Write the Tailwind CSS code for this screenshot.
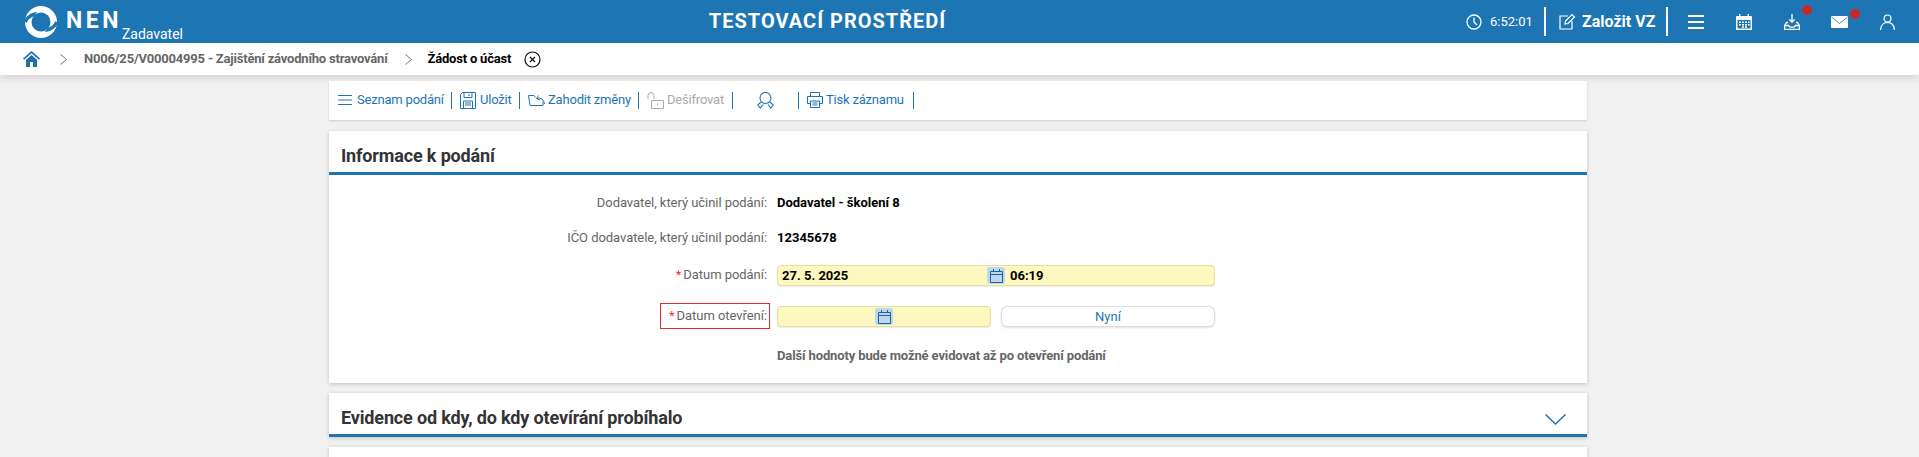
<!DOCTYPE html>
<html lang="cs"><head><meta charset="utf-8"><title>NEN</title>
<script src="https://cdn.jsdelivr.net/npm/@tailwindcss/browser@4"></script></head>
<body class="h-[457px] w-[1919px] overflow-hidden whitespace-nowrap bg-[#f1f1f1] font-['Roboto',sans-serif] text-[13px]">
<!-- header -->
<header class="relative flex h-[43px] items-center bg-[#1e75b3] text-white">
  <svg class="ml-[25px] h-[32px] w-[32px]" viewBox="0 0 32 32"><circle cx="16" cy="16" r="16" fill="white"/><circle cx="16" cy="16" r="9.500" fill="#1e75b3"/><path id="s" fill="#1e75b3" d="M-1 15C1 10 6 6.500 12 6L9.500 10C6 11 3.500 13 1.500 17z"/><path fill="#1e75b3" d="M33 17C31 22 26 25.500 20 26L22.500 22C26 21 28.500 19 30.500 15z"/></svg>
  <span class="ml-[9px] mt-[-2px] text-[23px] font-bold leading-none tracking-[3.5px]">NEN</span>
  <span class="ml-[0px] mt-[25px] text-[14px] leading-none">Zadavatel</span>
  <span class="absolute left-[659px] top-[9px] w-[337px] text-center text-[20px] font-bold leading-[24px] tracking-[1px]">TESTOVACÍ PROSTŘEDÍ</span>
  <div class="ml-auto flex items-center pr-[24px]">
  <svg class="h-[16px] w-[16px]" viewBox="0 0 16 16" fill="none" stroke="white" stroke-width="1.300"><circle cx="8" cy="8" r="7"/><path d="M8 3.500V8l3 3"/></svg>
  <span class="ml-[8px] w-[41px] text-[13px]">6:52:01</span>
  <span class="ml-[13px] h-[29px] w-[2px] bg-white"></span>
  <svg class="ml-[13px] h-[17px] w-[17px]" viewBox="0 0 17 17" fill="none" stroke="white" stroke-width="1.200"><path d="M9 3H1v13h12V8"/><path d="M6 11l.5-3L13 1.500l2.500 2.500L9 10.500z"/></svg>
  <span class="ml-[6px] w-[72px] text-[16px] font-bold">Založit VZ</span>
  <span class="ml-[12px] h-[29px] w-[2px] bg-white"></span>
  <svg class="ml-[20px] h-[16px] w-[16px]" viewBox="0 0 16 16" fill="white"><rect y="1" width="16" height="2"/><rect y="7" width="16" height="2"/><rect y="13" width="16" height="2"/></svg>
  <svg class="ml-[32px] h-[16px] w-[16px]" viewBox="0 0 16 16" fill="white"><path fill-rule="evenodd" d="M3 0h1.500v2h7V0H13v2h2a1 1 0 0 1 1 1v13H0V3a1 1 0 0 1 1-1h2zM1.500 6v8.500h13V6z"/><path d="M3 7.500h2v1.500H3zM6 7.500h2v1.500H6zM9 7.500h2v1.500H9zM12 7.500h1.500v1.500H12zM3 10h2v1.500H3zM6 10h2v1.500H6zM9 10h2v1.500H9zM12 10h1.500v1.500H12zM6 12.300h2v1.500H6zM9 12.300h2v1.500H9z"/></svg>
  <span class="relative ml-[32px] h-[16px] w-[16px]">
    <svg class="h-[16px] w-[16px]" viewBox="0 0 16 16" fill="none" stroke="white" stroke-width="1.300"><path d="M8 0v8M5.500 5.500L8 8.200l2.500-2.700"/><path d="M4 8.500H2.500L.7 11.500V15.300h14.600V11.500L13.500 8.500H12"/><path d="M.7 11.500H4.500c.5 1.500 1.500 1.800 3.500 1.800s3-.3 3.500-1.800h3.800" /></svg>
    <span class="absolute left-[18px] top-[-9px] h-[10px] w-[10px] rounded-full bg-[#c62828]"></span>
  </span>
  <span class="relative ml-[31px] h-[12px] w-[17px]">
    <svg class="h-[12px] w-[17px]" viewBox="0 0 17 12"><rect width="17" height="12" rx="1" fill="white"/><path d="M.5 1L8.500 7.500 16.500 1" fill="none" stroke="#1e75b3" stroke-width=".8"/></svg>
    <span class="absolute left-[19px] top-[-7px] h-[10px] w-[10px] rounded-full bg-[#c62828]"></span>
  </span>
  <svg class="ml-[32px] h-[16px] w-[15px]" viewBox="0 0 15 16" fill="none" stroke="white" stroke-width="1.200"><circle cx="7.500" cy="4.500" r="3.500"/><path d="M.7 16c0-5 3-7.500 6.800-7.500s6.800 2.500 6.800 7.500"/></svg>
  </div>
</header>
<!-- breadcrumb -->
<nav class="flex h-[32px] items-center bg-white font-bold tracking-[-0.2px] text-[#666] shadow-[0_2px_8px_rgba(0,0,0,0.15)]">
  <svg class="ml-[23px] h-[16px] w-[17px]" viewBox="0 0 17 16" fill="#1e6fa8"><path d="M8.500 0L0 7.500l1 1.200 7.500-6.500L16 8.700l1-1.200zM8.500 4L3 8.800V16h4v-5h3v5h4V8.800z"/></svg>
  <svg class="ml-[20px] h-[11px] w-[7px]" viewBox="0 0 7 11" fill="none" stroke="#777" stroke-width="1"><path d="M.5.500L6.500 5.500.5 10.500"/></svg>
  <span class="ml-[17px]">N006/25/V00004995 - Zajištění závodního stravování</span>
  <svg class="ml-[17px] h-[11px] w-[7px]" viewBox="0 0 7 11" fill="none" stroke="#777" stroke-width="1"><path d="M.5.500L6.500 5.500.5 10.500"/></svg>
  <span class="ml-[16px] text-black">Žádost o účast</span>
  <svg class="ml-[13px] h-[17px] w-[17px]" viewBox="0 0 17 17" fill="none" stroke="#111" stroke-width="1.200"><circle cx="8.500" cy="8.500" r="7.500"/><path d="M6 6l5 5M11 6l-5 5"/></svg>
</nav>
<main class="ml-[329px] w-[1258px]">
  <!-- toolbar -->
  <div class="mt-[6px] flex h-[39px] items-center bg-white pb-[1px] tracking-[-0.2px] text-[#1e75b3] shadow-[0_1px_2px_rgba(0,0,0,0.15)]">
    <svg class="ml-[9px] h-[12px] w-[14px]" viewBox="0 0 14 12" stroke="#1e75b3" stroke-width="1"><path d="M0 1.500h14M0 6h14M0 10.500h14"/></svg>
    <span class="ml-[5px] w-[88px]">Seznam podání</span>
    <span class="ml-[6px] h-[17px] w-px bg-[#1e75b3]"></span>
    <svg class="ml-[8px] h-[17px] w-[16px]" viewBox="0 0 16 17" fill="none" stroke="#1e75b3"><path d="M.5 2.500l2-2h13v16H.5zM4 .5v5h8v-5M9 2v2M3.500 16.500V9h9v7.500M5 11h6M5 13h6"/></svg>
    <span class="ml-[4px] w-[32px]">Uložit</span>
    <span class="ml-[7px] h-[17px] w-px bg-[#1e75b3]"></span>
    <svg class="ml-[8px] h-[12px] w-[17px]" viewBox="0 0 17 12" fill="none" stroke="#1e75b3"><path d="M.5 1.500h5.500l1.500 2M.5 1.500l1.500 10h13v-4M16.500 10C16 6 13 3 8.500 4.500M8.500 4.500L10.500 1.500M8.500 4.500l3.500 1.500"/></svg>
    <span class="ml-[3px] w-[83px]">Zahodit změny</span>
    <span class="ml-[7px] h-[17px] w-px bg-[#1e75b3]"></span>
    <svg class="ml-[8px] h-[17px] w-[17px]" viewBox="0 0 17 17" fill="none" stroke="#aaa"><path d="M1 7V3.500a3 3 0 0 1 6 0V7M4.500 8.500h12v8h-12zM10.500 11.500v2"/></svg>
    <span class="ml-[3px] w-[57px] text-[#aaa]">Dešifrovat</span>
    <span class="ml-[8px] h-[17px] w-px bg-[#1e75b3]"></span>
    <svg class="ml-[24px] h-[17px] w-[17px]" viewBox="0 0 17 17" fill="none" stroke="#1e75b3" stroke-width="1.100"><circle cx="8.500" cy="6" r="5.500"/><path d="M4 10L.8 13l2.500 3L6 12.500M13 10l3.200 3-2.500 3L11 12.500"/></svg>
    <span class="ml-[24px] h-[17px] w-px bg-[#1e75b3]"></span>
    <svg class="ml-[8px] h-[16px] w-[16px]" viewBox="0 0 16 16" fill="none" stroke="#1e75b3"><path d="M3.500 4.500V.5h9v4M3.500 11.500h-3v-7h15v7h-3M3.500 9h9v6.500h-9zM5.500 11h5M5.500 13h5"/></svg>
    <span class="ml-[3px] w-[79px]">Tisk záznamu</span>
    <span class="ml-[8px] h-[17px] w-px bg-[#1e75b3]"></span>
  </div>
  <!-- section -->
  <section class="mt-[11px] h-[252px] bg-white shadow-[0_1px_4px_rgba(0,0,0,0.2)]">
    <h2 class="flex h-[44px] items-end border-b-[3px] border-[#1e75b3] pb-[2px] pl-[12px] text-[18px] font-bold leading-[28px] tracking-[-0.15px] text-[#333]">Informace k podání</h2>
    <div class="grid grid-cols-[441px_438px] gap-x-[7px] pt-[18px] leading-[20px]">
      <div class="flex h-[20px] justify-end pr-[3px] tracking-[-0.05px] text-[#666]">Dodavatel, který učinil podání:</div>
      <div class="h-[20px] font-bold text-black">Dodavatel - školení 8</div>
      <div class="mt-[15px] flex h-[20px] justify-end pr-[3px] tracking-[-0.05px] text-[#666]">IČO dodavatele, který učinil podání:</div>
      <div class="mt-[15px] h-[20px] font-bold text-black">12345678</div>
      <div class="mt-[17px] flex h-[21px] justify-end pr-[3px] tracking-[-0.05px] text-[#666]"><span class="mr-[2px] text-[#e53935]">*</span>Datum podání:</div>
      <div class="mt-[17px] flex h-[21px] items-center rounded-[4px] border border-[#e6dfa0] bg-[#fdf8bf] font-bold text-black shadow-[0_1px_1px_rgba(0,0,0,0.08)]">
        <span class="ml-[4px] w-[205px]">27. 5. 2025</span>
        <span class="flex h-[17px] w-[18px] items-center justify-center rounded-[3px] bg-[#bcd8ec]"><svg class="h-[14px] w-[13px]" viewBox="0 0 13 14" fill="none" stroke="#1e5fa8"><path d="M.5 2.500h12v11H.5zM.5 5.500h12M3.500 0v2.500M9.500 0v2.500"/></svg></span>
        <span class="ml-[5px]">06:19</span>
      </div>
      <div class="mt-[20px] flex h-[21px] justify-end text-[#666]"><span class="mt-[-3px] flex h-[26px] w-[110px] items-center justify-end border border-[#e32b2b] pr-[2px] tracking-[-0.05px]"><span class="mr-[2px] text-[#e53935]">*</span>Datum otevření:</span></div>
      <div class="mt-[20px] flex h-[21px] gap-[10px]">
        <div class="flex h-[21px] w-[214px] items-center justify-center rounded-[4px] border border-[#e6dfa0] bg-[#fdf8bf] shadow-[0_1px_1px_rgba(0,0,0,0.08)]"><span class="flex h-[17px] w-[18px] items-center justify-center rounded-[3px] bg-[#bcd8ec]"><svg class="h-[14px] w-[13px]" viewBox="0 0 13 14" fill="none" stroke="#1e5fa8"><path d="M.5 2.500h12v11H.5zM.5 5.500h12M3.500 0v2.500M9.500 0v2.500"/></svg></span></div>
        <div class="flex h-[21px] w-[214px] items-center justify-center rounded-[6px] border border-[#ddd] bg-white text-[#1e75b3] shadow-[0_1px_2px_rgba(0,0,0,0.12)]">Nyní</div>
      </div>
      <div class="col-start-2 mt-[19px] h-[20px] font-bold tracking-[-0.13px] text-[#666]">Další hodnoty bude možné evidovat až po otevření podání</div>
    </div>
  </section>
  <section class="mt-[10px] flex h-[44px] items-end justify-between border-b-[3px] border-[#1e75b3] bg-white pb-[2px] pl-[12px] pr-[21px] shadow-[0_1px_4px_rgba(0,0,0,0.2)]">
    <h2 class="text-[18px] font-bold leading-[28px] tracking-[-0.15px] text-[#333]">Evidence od kdy, do kdy otevírání probíhalo</h2>
    <svg class="mb-[7px] h-[11px] w-[21px]" viewBox="0 0 21 11" fill="none" stroke="#1e75b3" stroke-width="1.500"><path d="M.5.500L10.500 10 20.500.5"/></svg>
  </section>
  <section class="mt-[10px] h-[10px] bg-white shadow-[0_1px_4px_rgba(0,0,0,0.2)]"></section>
</main>
</body></html>
